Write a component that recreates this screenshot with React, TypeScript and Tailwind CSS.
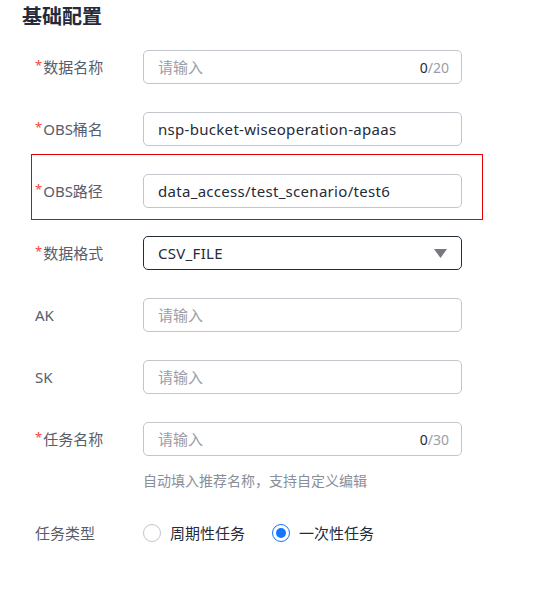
import React from "react";

const font = { fontFamily: '"Noto Sans", "Noto Sans CJK SC", sans-serif' };

interface FieldProps {
    label: string;
    required?: boolean;
    children: React.ReactNode;
}

const Field: React.FC<FieldProps> = ({ label, required, children }) => (
    <div className="flex items-start">
        <label className="w-[108px] h-[34px] flex items-center text-[15px] text-[#575d6c] shrink-0">
            {required && <span className="text-[#f5443c] text-[13px] mr-[1px] -mt-[3px]">*</span>}
            {label}
        </label>
        <div className="flex-1">{children}</div>
    </div>
);

const TextInput: React.FC<{ value?: string; placeholder?: string; max?: number }> = ({ value, placeholder, max }) => (
    <div className="h-[34px] w-[319px] border border-[#c2c5cc] rounded-[5px] flex items-center px-[14px] text-[15px]">
        {value ? (
            <span className="text-[#252b3a] flex-1 tracking-[0.3px]">{value}</span>
        ) : (
            <span className="text-[#9a9ea8] flex-1">{placeholder}</span>
        )}
        {max !== undefined && (
            <span className="text-[14px] text-[#9a9ea8] -mr-[2px]">
                <span className="text-[#252b3a]">0</span>/{max}
            </span>
        )}
    </div>
);

export default function App() {
    return (
        <div className="bg-white w-[547px] h-[606px]" style={font}>
            <h2 className="pl-[22px] pt-[3px] text-[20px] leading-[28px] font-bold text-[#252b3a]">基础配置</h2>
            <div className="pl-[35px] mt-[19px] flex flex-col gap-[28px]">
                <Field label="数据名称" required>
                    <TextInput placeholder="请输入" max={20} />
                </Field>
                <Field label="OBS桶名" required>
                    <TextInput value="nsp-bucket-wiseoperation-apaas" />
                </Field>
                <div className="relative">
                    <div className="absolute -top-[20px] -left-[4px] w-[452px] h-[66px] border border-[#e60000] pointer-events-none" />
                    <Field label="OBS路径" required>
                        <TextInput value="data_access/test_scenario/test6" />
                    </Field>
                </div>
                <Field label="数据格式" required>
                    <div className="h-[34px] w-[319px] border border-[#252b3a] rounded-[5px] flex items-center justify-between pl-[14px] pr-[14px] text-[15px] text-[#252b3a]">
                        <span className="tracking-[0.3px]">CSV_FILE</span>
                        <svg width="13" height="9" viewBox="0 0 13 9">
                            <path d="M0 0h13L6.5 9z" fill="#75787f" />
                        </svg>
                    </div>
                </Field>
                <Field label="AK">
                    <TextInput placeholder="请输入" />
                </Field>
                <Field label="SK">
                    <TextInput placeholder="请输入" />
                </Field>
                <Field label="任务名称" required>
                    <TextInput placeholder="请输入" max={30} />
                    <p className="mt-[15px] text-[14px] leading-[20px] text-[#8a8e99]">自动填入推荐名称，支持自定义编辑</p>
                </Field>
                <div className="flex items-center mt-[3px]">
                    <span className="w-[108px] text-[15px] text-[#575d6c]">任务类型</span>
                    <label className="flex items-center text-[15px] text-[#252b3a]">
                        <span className="w-[18px] h-[18px] rounded-full border border-[#c2c5cc] mr-[9px]" />
                        周期性任务
                    </label>
                    <label className="flex items-center text-[15px] text-[#252b3a] ml-[27px]">
                        <span className="w-[18px] h-[18px] rounded-full border-[1.5px] border-[#1476ff] mr-[9px] flex items-center justify-center">
                            <span className="w-[10px] h-[10px] rounded-full bg-[#1476ff]" />
                        </span>
                        一次性任务
                    </label>
                </div>
            </div>
        </div>
    );
}
